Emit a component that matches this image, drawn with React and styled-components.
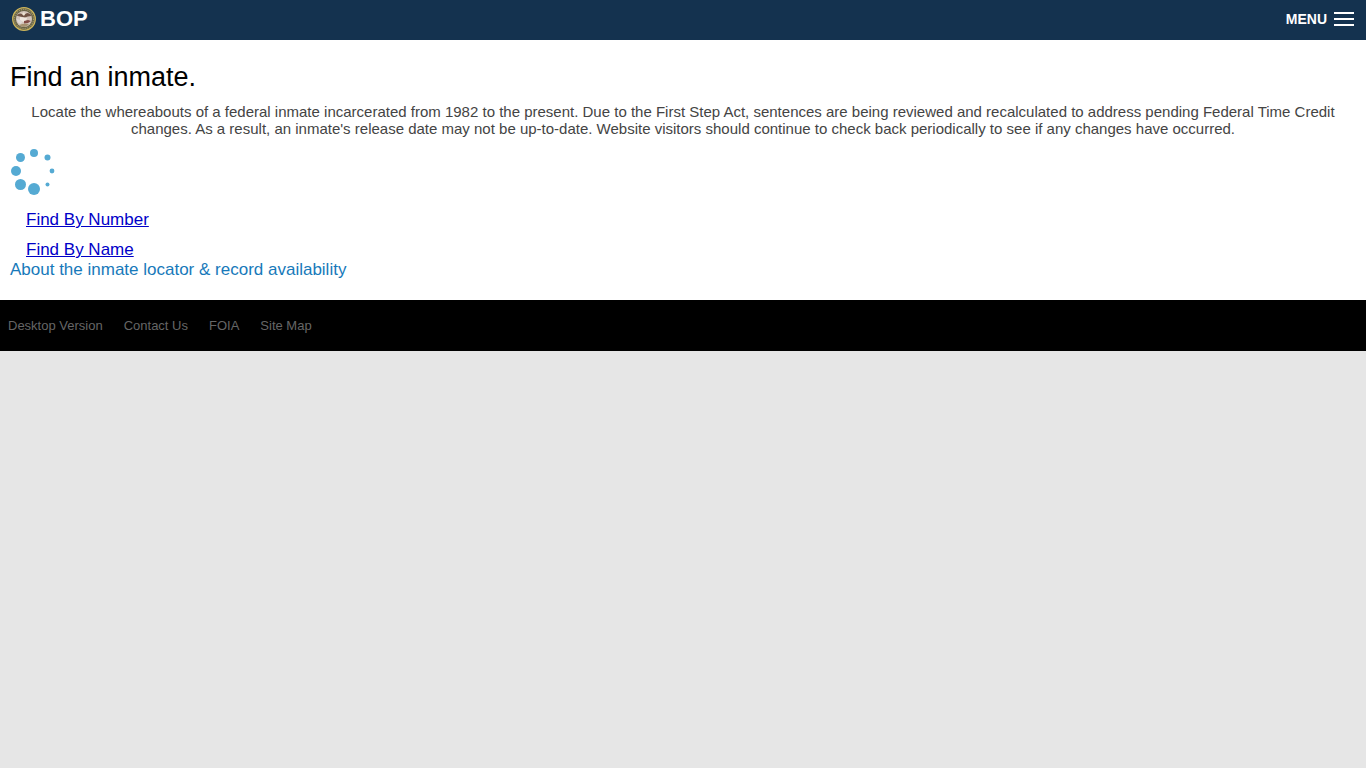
import React from 'react';
import styled, { createGlobalStyle } from 'styled-components';

const GlobalStyle = createGlobalStyle`
  * { box-sizing: border-box; }
  body {
    margin: 0;
    background: #e6e6e6;
    color: #000;
    font-family: "Liberation Sans", Arial, sans-serif;
    font-size: 17px;
    line-height: 20px;
  }
`;

const Header = styled.header`
  display: flex;
  align-items: center;
  justify-content: space-between;
  height: 40px;
  padding: 0 12px 2px;
  background: #14324f;
`;

const Brand = styled.a`
  display: flex;
  align-items: center;
  gap: 4px;
  color: #fff;
  font-size: 22px;
  font-weight: bold;
  text-decoration: none;
`;

const MenuButton = styled.button`
  display: flex;
  align-items: center;
  gap: 7px;
  padding: 0;
  border: 0;
  background: none;
  color: #fff;
  font: bold 14px/20px "Liberation Sans", Arial, sans-serif;
  cursor: pointer;
`;

const Bars = styled.span`
  width: 20px;
  height: 14px;
  border: solid #fff;
  border-width: 2px 0;
  background: linear-gradient(#fff, #fff) center / 100% 2px no-repeat;
`;

const Main = styled.main`
  padding: 21px 10px 20px;
  background: #fff;
`;

const Title = styled.h1`
  margin: 0;
  font-size: 27px;
  font-weight: normal;
  line-height: 32px;
`;

const Intro = styled.p`
  margin: 10px 0;
  padding: 0 10px;
  color: #444;
  font-size: 15px;
  line-height: 17px;
  text-align: center;
`;

const Spinner = styled.svg`
  display: block;
`;

const SearchList = styled.ul`
  display: flex;
  flex-direction: column;
  gap: 10px;
  margin: 15px 0 0;
  padding: 0 16px;
  list-style: none;
`;

const SearchLink = styled.a`
  color: #0000c8;
`;

const AboutLink = styled.a`
  color: #1779ba;
  text-decoration: none;
`;

const Footer = styled.footer`
  display: flex;
  flex-wrap: wrap;
  gap: 21px;
  padding: 16px 8px 15px;
  background: #000;
`;

const FooterLink = styled.a`
  color: #666;
  font-size: 13px;
  text-decoration: none;
`;

const dots = [
  [24, 6, 4], [37.5, 10.5, 3], [42, 24, 2.4], [37.5, 37.5, 2],
  [24, 42, 6], [10.5, 37.5, 5.5], [6, 24, 5], [10.5, 10.5, 4.5],
];

function Seal() {
  return (
    <svg width="24" height="24" viewBox="0 0 24 24" aria-hidden="true">
      <circle cx="12" cy="12" r="11.3" fill="#676347" stroke="#cdb55b" strokeWidth="1.3" />
      <circle cx="12" cy="12" r="9.6" fill="none" stroke="#a59967" strokeWidth="1.2" strokeDasharray="1.2 1" />
      <circle cx="12" cy="12" r="8" fill="#d3c5bb" />
      <path d="M4.8 8.8Q7 5.2 10 7l2 1 3-2q3 0 4.4 3l-3.6.5-3 1-5-1z" fill="#705345" />
      <path d="M8 10l7 1-1 3-3 1-3-2z" fill="#efe7df" />
      <path d="M4.5 12l4 1 2 2-2 2q-3-1-4-5z" fill="#ded9d5" />
      <path d="M12 14l4-1 3 1-3 2-4 .5z" fill="#824c46" />
      <path d="M7 18q5-2 10-1-2 3-5 3-3 0-5-2z" fill="#a69271" />
      <path d="M10 7l2-2 1 2-1 2z" fill="#eee4d4" />
    </svg>
  );
}

const footerLinks = ['Desktop Version', 'Contact Us', 'FOIA', 'Site Map'];

export default function App() {
  return (
    <>
      <GlobalStyle />
      <Header>
        <Brand href="#home"><Seal />BOP</Brand>
        <MenuButton type="button">MENU<Bars /></MenuButton>
      </Header>
      <Main>
        <Title>Find an inmate.</Title>
        <Intro>
          Locate the whereabouts of a federal inmate incarcerated from 1982 to the present. Due to the
          First Step Act, sentences are being reviewed and recalculated to address pending Federal Time
          Credit changes. As a result, an inmate's release date may not be up-to-date. Website visitors
          should continue to check back periodically to see if any changes have occurred.
        </Intro>
        <Spinner width="48" height="48" viewBox="0 0 48 48" role="img" aria-label="Loading">
          {dots.map(([x, y, r]) => <circle key={`${x}-${y}`} cx={x} cy={y} r={r} fill="#55aad3" />)}
        </Spinner>
        <SearchList>
          <li><SearchLink href="#number">Find By Number</SearchLink></li>
          <li><SearchLink href="#name">Find By Name</SearchLink></li>
        </SearchList>
        <AboutLink href="#about">About the inmate locator &amp; record availability</AboutLink>
      </Main>
      <Footer>
        {footerLinks.map((text) => <FooterLink key={text} href="#footer">{text}</FooterLink>)}
      </Footer>
    </>
  );
}
